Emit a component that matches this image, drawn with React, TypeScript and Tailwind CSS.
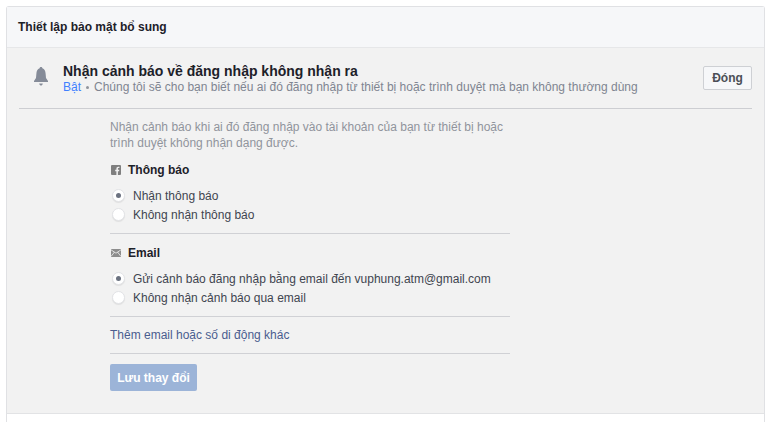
const font = { fontFamily: '"Liberation Sans", Arial, sans-serif' };

function Radio({ checked, label }: { checked?: boolean; label: string }) {
  return (
    <div className="flex h-[19px] items-center">
      <span className="ml-[2px] flex h-[13px] w-[13px] items-center justify-center rounded-full border border-[#e2e3e6] bg-white shadow-[0_1px_1px_rgba(0,0,0,0.08)]">
        {checked && <span className="h-[5px] w-[5px] rounded-full bg-[#6b7280]" />}
      </span>
      <span className="ml-[8px] text-[12px] text-[#3f4550]">{label}</span>
    </div>
  );
}

function Divider() {
  return <div className="h-px w-[400px] bg-[#d0d1d5]" />;
}

export default function App() {
  return (
    <div style={font} className="h-[422px] w-[772px] overflow-hidden bg-white pl-[6px] pr-[7px] pt-[6px]">
      <div className="h-[416px] rounded-t-[3px] border border-b-0 border-[#e0e1e4] bg-[#f2f2f2]">
        <div className="flex h-[41px] items-center border-b border-[#e6e7e9] bg-[#f6f7f9] pl-[11px] pb-[1px] text-[12px] font-bold text-[#1d2129]">
          Thiết lập bảo mật bổ sung
        </div>

        <div className="mx-[12px] flex h-[61px] items-start border-b border-[#cdced2]">
          <svg viewBox="0 0 14 19" className="ml-[15px] mt-[19px] mr-[1px] h-[19px] w-[14px] shrink-0" fill="#858b98">
            <path d="M7 0c.8 0 1.300.5 1.400 1.300C10.500 2 11.500 4 11.600 6.500L12 11l2 3v1H0v-1l2-3 .4-4.500C2.500 4 3.500 2 5.600 1.300 5.700.5 6.200 0 7 0z" />
            <path d="M5.200 16.500h3.600C8.500 18 7.800 18.500 7 18.500s-1.500-.5-1.800-2z" />
          </svg>
          <div className="ml-[14px] mt-[14px] min-w-0 flex-1">
            <div className="text-[14px] leading-[18px] font-bold text-[#1d2129]">Nhận cảnh báo về đăng nhập không nhận ra</div>
            <div className="mt-[-1px] flex items-center whitespace-nowrap text-[12px] leading-[16px] text-[#7f8591]">
              <span className="w-[23px] text-[#4080ff]">Bật</span>
              <span className="h-[3px] w-[3px] rounded-full bg-[#90949c]" />
              <span className="ml-[5px]">Chúng tôi sẽ cho bạn biết nếu ai đó đăng nhập từ thiết bị hoặc trình duyệt mà bạn không thường dùng</span>
            </div>
          </div>
          <button className="mt-[18px] h-[24px] w-[49px] shrink-0 rounded-[2px] border border-[#ced0d4] bg-[#f6f7f9] text-[12px] font-bold text-[#4b4f56]">
            Đóng
          </button>
        </div>

        <div className="ml-[103px] w-[420px]">
          <p className="mt-[10px] text-[12px] leading-[16px] text-[#90949c]">
            Nhận cảnh báo khi ai đó đăng nhập vào tài khoản của bạn từ thiết bị hoặc
            <br />
            trình duyệt không nhận dạng được.
          </p>

          <div className="mt-[11px] flex h-[16px] items-center text-[12px] font-bold text-[#1d2129]">
            <svg viewBox="0 0 10 10" className="ml-[1px] h-[10px] w-[10px]">
              <rect width="10" height="10" rx="1" fill="#7f7f7f" />
              <path d="M6.900 10V6.200h1.200l.2-1.500H6.900v-.9c0-.4.100-.7.700-.7h.8V1.800c-.2 0-.6-.1-1.100-.1-1.100 0-1.900.7-1.900 1.900v1.100H4.200v1.500h1.200V10z" fill="#f2f2f2" />
            </svg>
            <span className="ml-[7px]">Thông báo</span>
          </div>

          <div className="mt-[8px]">
            <Radio checked label="Nhận thông báo" />
            <Radio label="Không nhận thông báo" />
          </div>

          <div className="mt-[9px]"><Divider /></div>

          <div className="mt-[11px] flex h-[16px] items-center text-[12px] font-bold text-[#1d2129]">
            <svg viewBox="0 0 10 8" className="ml-[1px] h-[8px] w-[10px]">
              <rect width="10" height="8" fill="#8d8d8d" />
              <path d="M0 .8l5 3.400L10 .8M0 7.500l3.500-4.500M10 7.500L6.500 3" fill="none" stroke="#f2f2f2" strokeWidth=".8" />
            </svg>
            <span className="ml-[7px]">Email</span>
          </div>

          <div className="mt-[8px]">
            <Radio checked label="Gửi cảnh báo đăng nhập bằng email đến vuphung.atm@gmail.com" />
            <Radio label="Không nhận cảnh báo qua email" />
          </div>

          <div className="mt-[9px]"><Divider /></div>

          <div className="flex h-[36px] items-center text-[12px] text-[#4a5d8f]">Thêm email hoặc số di động khác</div>

          <Divider />

          <button className="mt-[10px] h-[27px] w-[87px] rounded-[2px] bg-[#9cb4d8] text-[12px] font-bold text-white">
            Lưu thay đổi
          </button>
        </div>

        <div className="mt-[22px] h-[12px] border-t border-[#e2e3e5] bg-white" />
      </div>
    </div>
  );
}
